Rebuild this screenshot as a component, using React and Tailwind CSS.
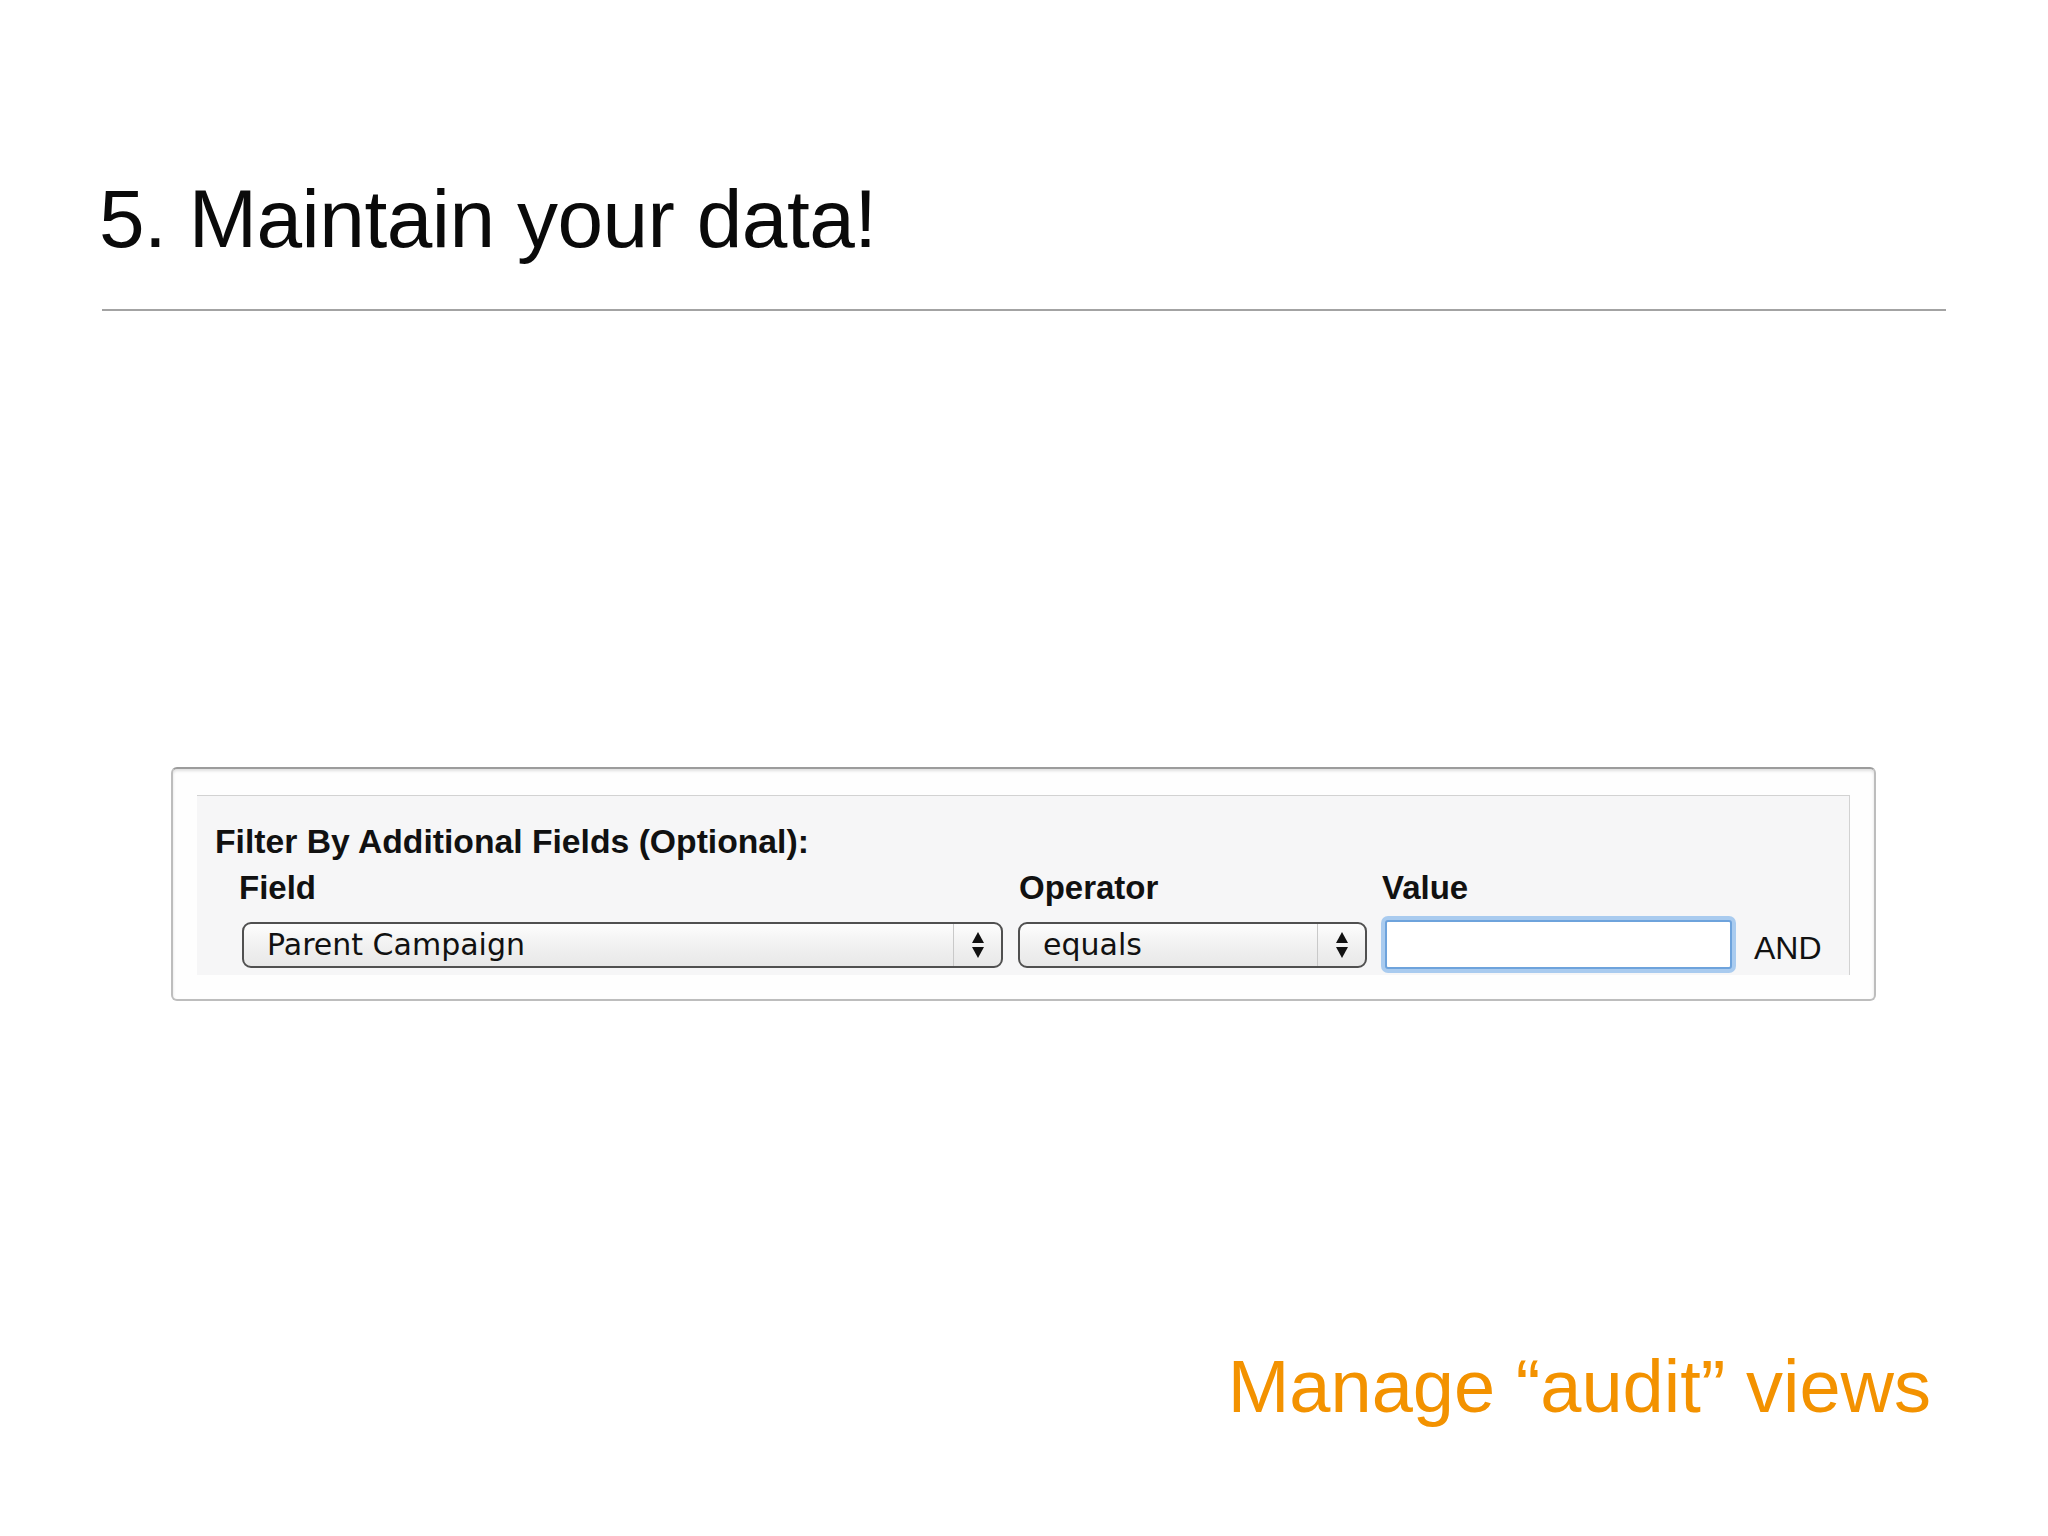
const Arrows = () => (
  <svg width="14" height="28" viewBox="0 0 14 28" className="shrink-0">
    <path d="M7 1 L13 12 L1 12 Z" fill="#111" />
    <path d="M7 27 L13 16 L1 16 Z" fill="#111" />
  </svg>
);

const Select = ({ value, width }) => (
  <div
    className={`${width} h-[46px] flex items-stretch rounded-[9px] border-2 border-[#505050] bg-linear-to-b from-[#fdfdfd] via-[#f1f1f1] to-[#e8e8e8] overflow-hidden`}
  >
    <div
      className="flex-1 flex items-center pl-[23px] text-[30px] text-[#111]"
      style={{ fontFamily: '"DejaVu Sans", sans-serif' }}
    >
      {value}
    </div>
    <div className="w-[48px] border-l border-[#c9c9c9] flex items-center justify-center">
      <Arrows />
    </div>
  </div>
);

const Label = ({ children, className = '' }) => (
  <div className={`h-[38px] leading-[38px] text-[33px] font-bold text-[#111] ${className}`}>{children}</div>
);

export default function App() {
  return (
    <div
      className="w-[2048px] h-[1536px] bg-white flex flex-col overflow-hidden"
      style={{ fontFamily: '"Liberation Sans", Arial, sans-serif' }}
    >
      {/* Title */}
      <h1 className="mt-[178px] ml-[99px] text-[82px] leading-none font-normal text-[#0a0a0a] tracking-[-0.5px]">
        5. Maintain your data!
      </h1>
      <div className="mt-[49px] ml-[102px] w-[1844px] h-[2px] bg-[#a3a3a3]" />

      {/* Filter panel */}
      <div className="mt-[456px] ml-[171px] w-[1705px] h-[234px] rounded-[6px] border-2 border-[#bdbdbd] border-t-[#9c9c9c] bg-[#fefefe] shadow-[inset_0_2px_3px_rgba(0,0,0,0.12)] pl-[24px] pr-[24px] pt-[26px] pb-[24px]">
        <div className="w-[1653px] h-[180px] border-t border-r border-[#d2d2d2] bg-[#f6f6f7] pt-[26px]">
          <div className="pl-[18px] h-[38px] leading-[38px] text-[33.7px] font-bold text-[#111]">
            Filter By Additional Fields (Optional):
          </div>

          <div className="mt-[9px] pl-[42px] flex">
            <div className="w-[779px] flex flex-col">
              <Label>Field</Label>
              <div className="mt-[9px] h-[57px] flex items-center pl-[3px]">
                <Select value="Parent Campaign" width="w-[761px]" />
              </div>
            </div>

            <div className="w-[363px] flex flex-col">
              <Label className="pl-[1px]">Operator</Label>
              <div className="mt-[9px] h-[57px] flex items-center">
                <Select value="equals" width="w-[349px]" />
              </div>
            </div>

            <div className="w-[373px] flex flex-col">
              <Label className="pl-[1px]">Value</Label>
              <div className="mt-[9px] h-[57px] rounded-[7px] w-[355px] bg-[#a9cbef] p-[4px]">
                <div className="h-full rounded-[3px] border-2 border-[#6ea3dc] bg-white" />
              </div>
            </div>

            <div className="flex flex-col">
              <div className="h-[38px]" />
              <div className="mt-[9px] h-[57px] flex items-center pt-[6px] text-[32px] text-[#111]">AND</div>
            </div>
          </div>
        </div>
      </div>

      {/* Footer note */}
      <div className="mt-[349px] pr-[117px] text-right text-[74px] leading-none text-[#f39200]">
        Manage “audit” views
      </div>
    </div>
  );
}
